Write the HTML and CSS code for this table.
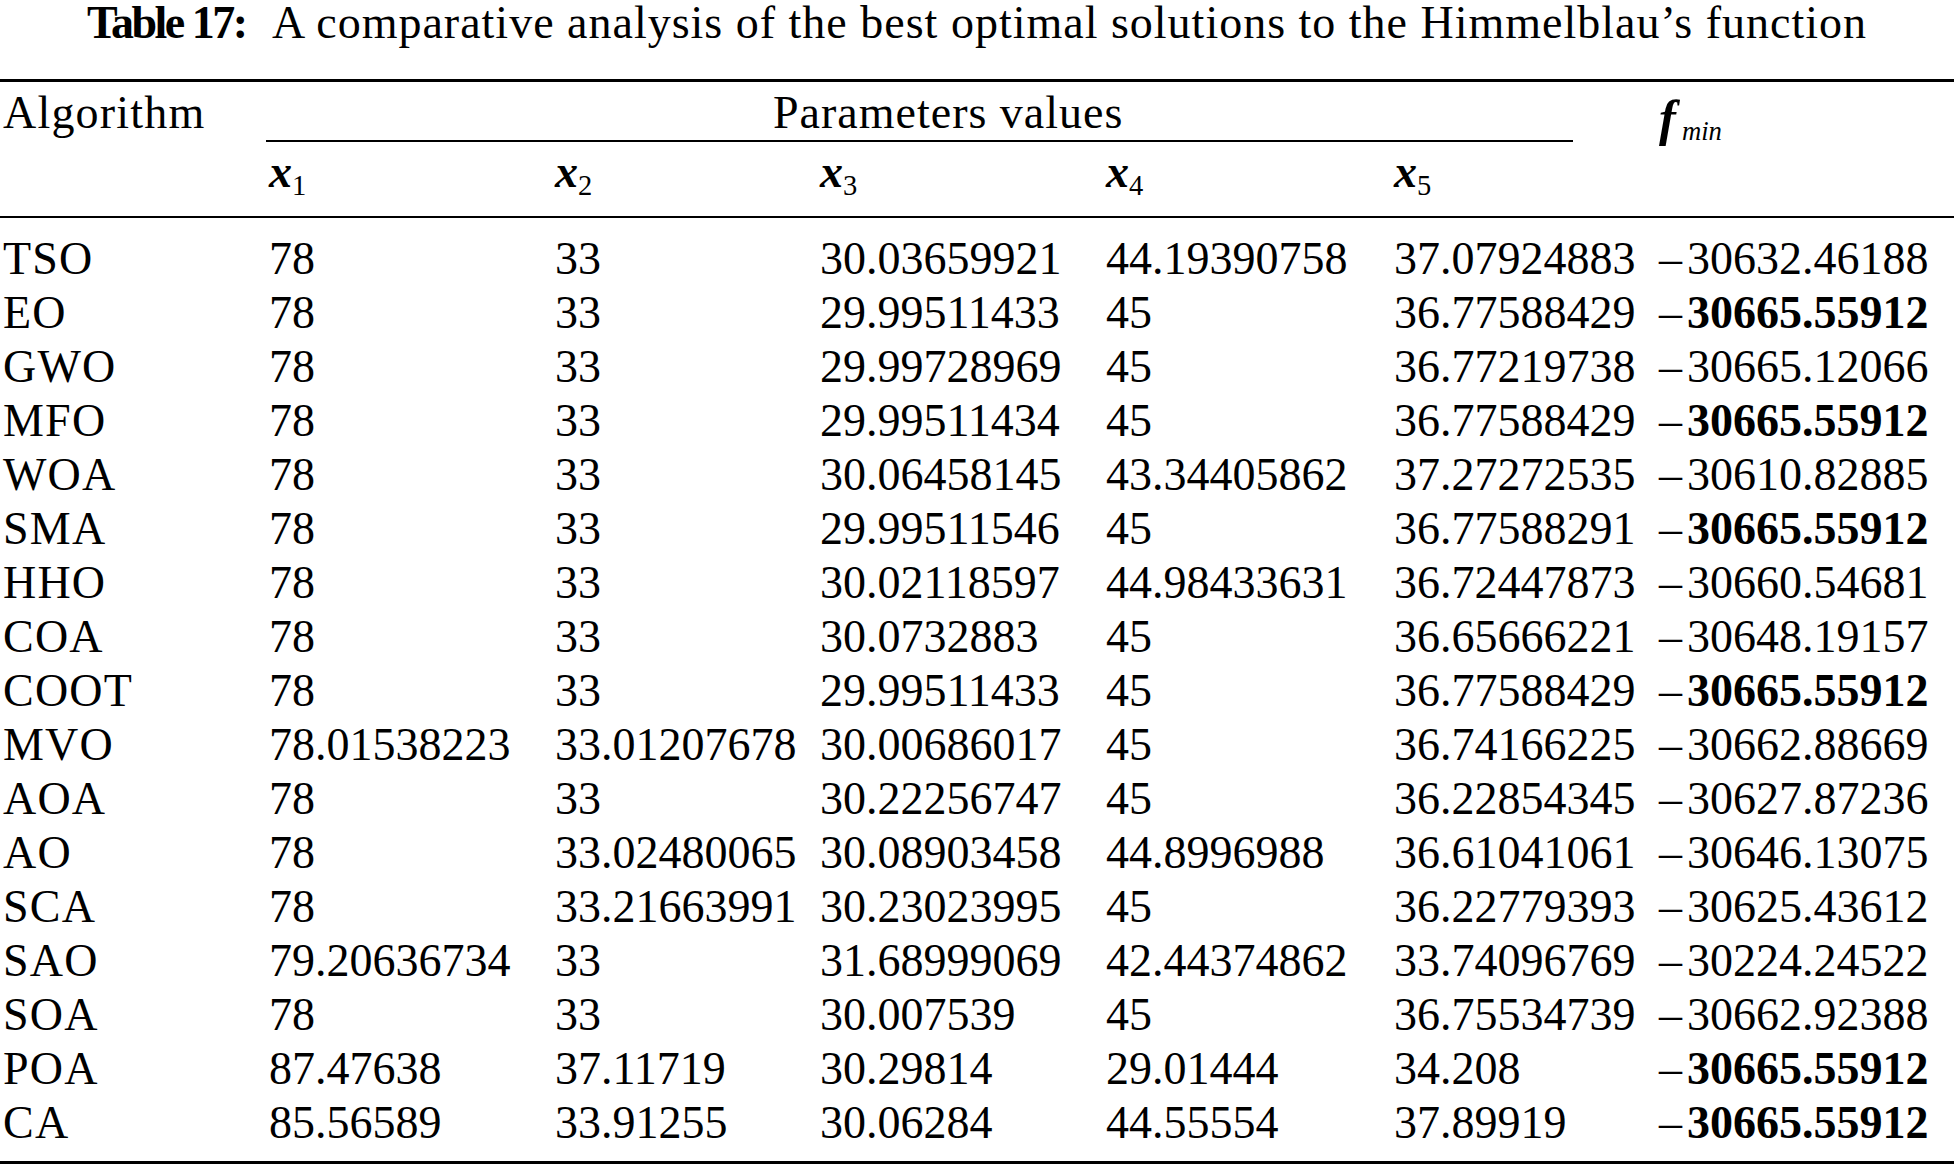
FILE: index.html
```html
<!DOCTYPE html>
<html lang="en">
<head>
<meta charset="utf-8">
<title>Table 17</title>
<link rel="stylesheet" href="styles.css">
</head>
<body>
<div class="page">
  <p class="caption"><b class="caption-label">Table 17:</b>&nbsp; A comparative analysis of the best optimal solutions to the Himmelblau’s function</p>
  <table class="results">
    <colgroup>
      <col class="c-alg">
      <col class="c-x1">
      <col class="c-x2">
      <col class="c-x3">
      <col class="c-x4">
      <col class="c-x5">
      <col class="c-f">
    </colgroup>
    <thead>
      <tr class="h1">
        <th rowspan="2" class="alg-head">Algorithm</th>
        <th colspan="5" class="params-head"><div class="params-rule"><span class="params-label">Parameters values</span></div></th>
        <th rowspan="2" class="fmin-head"><i class="var var-f">f</i><sub class="sub-min">min</sub></th>
      </tr>
      <tr class="h2">
        <th class="xh"><i class="var">x</i><sub>1</sub></th>
        <th class="xh"><i class="var">x</i><sub>2</sub></th>
        <th class="xh"><i class="var">x</i><sub>3</sub></th>
        <th class="xh"><i class="var">x</i><sub>4</sub></th>
        <th class="xh"><i class="var">x</i><sub>5</sub></th>
      </tr>
    </thead>
    <tbody>
      <tr><td class="name">TSO</td><td>78</td><td>33</td><td>30.03659921</td><td>44.19390758</td><td>37.07924883</td><td><span class="neg">–</span>30632.46188</td></tr>
      <tr><td class="name">EO</td><td>78</td><td>33</td><td>29.99511433</td><td>45</td><td>36.77588429</td><td><span class="neg">–</span><b>30665.55912</b></td></tr>
      <tr><td class="name">GWO</td><td>78</td><td>33</td><td>29.99728969</td><td>45</td><td>36.77219738</td><td><span class="neg">–</span>30665.12066</td></tr>
      <tr><td class="name">MFO</td><td>78</td><td>33</td><td>29.99511434</td><td>45</td><td>36.77588429</td><td><span class="neg">–</span><b>30665.55912</b></td></tr>
      <tr><td class="name">WOA</td><td>78</td><td>33</td><td>30.06458145</td><td>43.34405862</td><td>37.27272535</td><td><span class="neg">–</span>30610.82885</td></tr>
      <tr><td class="name">SMA</td><td>78</td><td>33</td><td>29.99511546</td><td>45</td><td>36.77588291</td><td><span class="neg">–</span><b>30665.55912</b></td></tr>
      <tr><td class="name">HHO</td><td>78</td><td>33</td><td>30.02118597</td><td>44.98433631</td><td>36.72447873</td><td><span class="neg">–</span>30660.54681</td></tr>
      <tr><td class="name">COA</td><td>78</td><td>33</td><td>30.0732883</td><td>45</td><td>36.65666221</td><td><span class="neg">–</span>30648.19157</td></tr>
      <tr><td class="name">COOT</td><td>78</td><td>33</td><td>29.99511433</td><td>45</td><td>36.77588429</td><td><span class="neg">–</span><b>30665.55912</b></td></tr>
      <tr><td class="name">MVO</td><td>78.01538223</td><td>33.01207678</td><td>30.00686017</td><td>45</td><td>36.74166225</td><td><span class="neg">–</span>30662.88669</td></tr>
      <tr><td class="name">AOA</td><td>78</td><td>33</td><td>30.22256747</td><td>45</td><td>36.22854345</td><td><span class="neg">–</span>30627.87236</td></tr>
      <tr><td class="name">AO</td><td>78</td><td>33.02480065</td><td>30.08903458</td><td>44.8996988</td><td>36.61041061</td><td><span class="neg">–</span>30646.13075</td></tr>
      <tr><td class="name">SCA</td><td>78</td><td>33.21663991</td><td>30.23023995</td><td>45</td><td>36.22779393</td><td><span class="neg">–</span>30625.43612</td></tr>
      <tr><td class="name">SAO</td><td>79.20636734</td><td>33</td><td>31.68999069</td><td>42.44374862</td><td>33.74096769</td><td><span class="neg">–</span>30224.24522</td></tr>
      <tr><td class="name">SOA</td><td>78</td><td>33</td><td>30.007539</td><td>45</td><td>36.75534739</td><td><span class="neg">–</span>30662.92388</td></tr>
      <tr><td class="name">POA</td><td>87.47638</td><td>37.11719</td><td>30.29814</td><td>29.01444</td><td>34.208</td><td><span class="neg">–</span><b>30665.55912</b></td></tr>
      <tr><td class="name">CA</td><td>85.56589</td><td>33.91255</td><td>30.06284</td><td>44.55554</td><td>37.89919</td><td><span class="neg">–</span><b>30665.55912</b></td></tr>
    </tbody>
  </table>
</div>
</body>
</html>
```

FILE: styles.css
```css
html, body {
  margin: 0;
  padding: 0;
  background: #ffffff;
}

.page {
  width: 1954px;
  font-family: "Liberation Serif", "Times New Roman", serif;
  color: #000000;
  font-size: 46px;
}

.caption {
  margin: 0 0 33px 0;
  height: 46px;
  line-height: 46px;
  text-align: center;
  white-space: nowrap;
  letter-spacing: 1px;
}

.caption-label {
  font-weight: bold;
  letter-spacing: -2.5px;
  margin-right: 4px;
}

.results {
  width: 1954px;
  table-layout: fixed;
  border-collapse: separate;
  border-spacing: 0;
  line-height: 54px;
}

.c-alg { width: 266px; }
.c-x1 { width: 286px; }
.c-x2 { width: 265px; }
.c-x3 { width: 286px; }
.c-x4 { width: 288px; }
.c-x5 { width: 265px; }
.c-f { width: 298px; }

.results th,
.results td {
  padding: 0 0 0 3px;
  text-align: left;
  white-space: nowrap;
  font-weight: normal;
  vertical-align: top;
}

.h1 th {
  border-top: 3px solid #000;
  padding-top: 4px;
}

.alg-head {
  border-bottom: 2px solid #000;
  letter-spacing: 1.2px;
}

.results .name {
  letter-spacing: 1.2px;
}

.params-head.params-head {
  padding-left: 0;
}

.params-rule {
  margin-right: 83px;
  border-bottom: 2px solid #000;
  padding-left: 507px;
}

.params-label {
  letter-spacing: 1px;
}

.fmin-head.fmin-head {
  padding-top: 9px;
  border-bottom: 2px solid #000;
}

.h2 .xh {
  padding-top: 3px;
  padding-bottom: 17px;
  border-bottom: 2px solid #000;
}

.var {
  font-style: italic;
  font-weight: bold;
}

.var-f {
  font-size: 1.1em;
}

sub {
  font-size: 0.62em;
  line-height: 0;
  vertical-align: -0.28em;
  font-weight: normal;
}

.sub-min {
  font-style: italic;
  font-size: 0.58em;
  margin-left: 6px;
  vertical-align: -0.2em;
}

.neg {
  margin-right: 5px;
}

.results tbody tr:first-child td {
  padding-top: 14px;
}

.results tbody tr:last-child td {
  padding-bottom: 11px;
  border-bottom: 3px solid #000;
}

.results td b {
  font-weight: bold;
}
```
